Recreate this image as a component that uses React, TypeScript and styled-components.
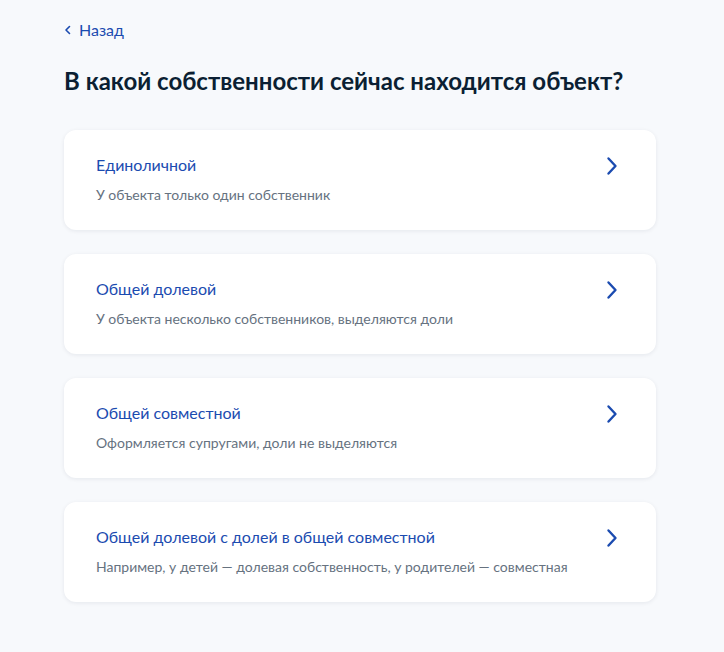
import styled, { createGlobalStyle } from 'styled-components';

interface IOption {
  title: string;
  hint: string;
}

const options: IOption[] = [
  { title: 'Единоличной', hint: 'У объекта только один собственник' },
  {
    title: 'Общей долевой',
    hint: 'У объекта несколько собственников, выделяются доли',
  },
  {
    title: 'Общей совместной',
    hint: 'Оформляется супругами, доли не выделяются',
  },
  {
    title: 'Общей долевой с долей в общей совместной',
    hint: 'Например, у детей — долевая собственность, у родителей — совместная',
  },
];

const LINK_BLUE = '#1b4bb0';

function App() {
  return (
    <>
      <GlobalStyle />
      <PageDiv>
        <BackLink href='#'>
          <svg width='8' height='10' viewBox='0 0 8 10' fill='none'>
            <path
              d='M5.5 1.5L2 5l3.5 3.5'
              stroke={LINK_BLUE}
              strokeWidth='1.6'
              strokeLinecap='round'
              strokeLinejoin='round'
            />
          </svg>
          <span>Назад</span>
        </BackLink>
        <HeaderH1>В какой собственности сейчас находится объект?</HeaderH1>
        <ListDiv>
          {options.map((o) => (
            <OptionCard key={o.title}>
              <OptionText>
                <OptionTitle>{o.title}</OptionTitle>
                <OptionHint>{o.hint}</OptionHint>
              </OptionText>
              <ChevronBox>
                <svg width='24' height='24' viewBox='0 0 24 24' fill='none'>
                  <path
                    d='M8.5 4.5L15.5 12l-7 7.5'
                    stroke={LINK_BLUE}
                    strokeWidth='2.4'
                    strokeLinecap='round'
                    strokeLinejoin='round'
                  />
                </svg>
              </ChevronBox>
            </OptionCard>
          ))}
        </ListDiv>
      </PageDiv>
    </>
  );
}

const GlobalStyle = createGlobalStyle`
  html, body {
    margin: 0;
    padding: 0;
    background-color: #f7f9fc;
  }
  body {
    font-family: Lato, 'Noto Sans', sans-serif;
  }
`;

const PageDiv = styled.div`
  display: flex;
  flex-direction: column;
  box-sizing: border-box;
  width: 724px;
  min-height: 652px;
  padding: 18px 68px 40px 64px;
`;

const BackLink = styled.a`
  display: flex;
  flex-direction: row;
  align-items: center;
  gap: 7px;
  align-self: flex-start;
  font-size: 16px;
  line-height: 24px;
  color: ${LINK_BLUE};
  text-decoration: none;
`;

const HeaderH1 = styled.h1`
  margin: 23px 0 0;
  font-size: 24px;
  line-height: 32px;
  font-weight: 700;
  color: #0b1f33;
`;

const ListDiv = styled.div`
  display: flex;
  flex-direction: column;
  gap: 24px;
  margin-top: 33px;
`;

const OptionCard = styled.div`
  display: flex;
  flex-direction: row;
  align-items: flex-start;
  justify-content: space-between;
  box-sizing: border-box;
  height: 100px;
  padding: 23px 32px 24px 32px;
  background-color: #ffffff;
  border-radius: 12px;
  box-shadow: 0 1px 4px rgba(11, 31, 51, 0.08);
  cursor: pointer;
`;

const OptionText = styled.div`
  display: flex;
  flex-direction: column;
  gap: 8px;
`;

const OptionTitle = styled.div`
  font-size: 16px;
  line-height: 24px;
  color: ${LINK_BLUE};
`;

const OptionHint = styled.div`
  font-size: 14px;
  line-height: 20px;
  color: #66727f;
`;

const ChevronBox = styled.div`
  display: flex;
  width: 24px;
  height: 24px;
  margin-top: 1px;
`;

export default App;
